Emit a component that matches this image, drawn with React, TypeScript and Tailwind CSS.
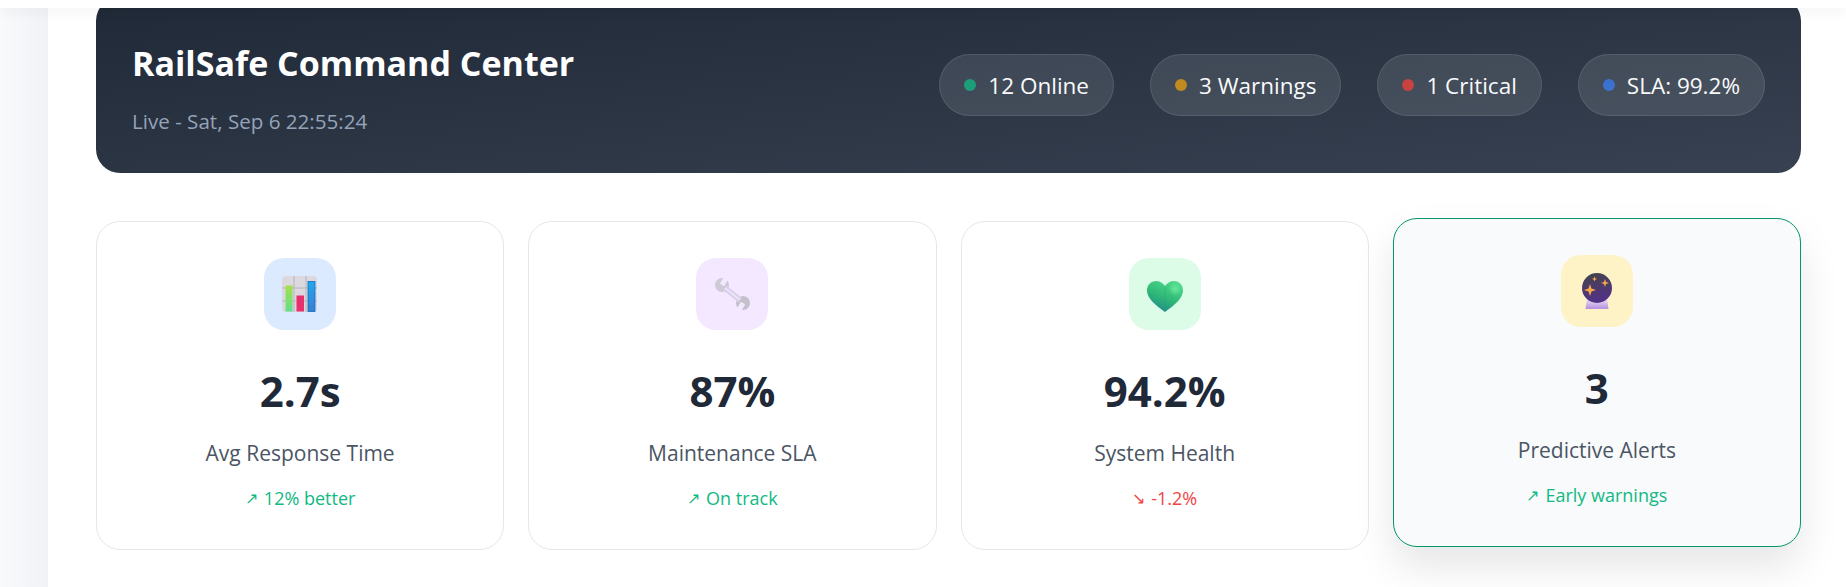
import type { ReactNode } from 'react'

const ChartIcon = () => (
  <svg viewBox="0 0 36 36" className="w-9 h-9">
    <defs>
      <linearGradient id="barGreen" x1="0" y1="0" x2="0" y2="1">
        <stop offset="0" stopColor="#a5e04a" />
        <stop offset="1" stopColor="#5fe08c" />
      </linearGradient>
      <linearGradient id="barBlue" x1="0" y1="0" x2="0" y2="1">
        <stop offset="0" stopColor="#22a7f0" />
        <stop offset="1" stopColor="#3a7fd0" />
      </linearGradient>
    </defs>
    <rect x="0" y="0" width="35" height="36" rx="4" fill="#dcd8df" />
    <path d="M12 0v36M24 0v36M0 12h35M0 25h35" stroke="#b9b4bd" strokeWidth="1" />
    <rect x="3.500" y="9.500" width="7" height="26" fill="url(#barGreen)" />
    <rect x="14.500" y="19.500" width="7.500" height="16" fill="#e8306e" />
    <rect x="26" y="5.500" width="7" height="30" fill="url(#barBlue)" stroke="#0d6fc4" strokeWidth="0.8" />
  </svg>
)

const WrenchIcon = () => (
  <svg viewBox="0 0 36 36" className="w-9 h-9" fill="none">
    <circle cx="8" cy="9" r="7" fill="#cdc9d5" />
    <circle cx="29" cy="27" r="7" fill="#c4c0cc" />
    <path d="M8 9L12 2" stroke="#f3e8ff" strokeWidth="5" />
    <path d="M29 27L25 34" stroke="#f3e8ff" strokeWidth="5" />
    <path d="M11 12L26 24" stroke="#d9d0ee" strokeWidth="5.500" />
    <path d="M11 12L26 24" stroke="#efeaf8" strokeWidth="1.500" />
  </svg>
)

const HeartIcon = () => (
  <svg viewBox="0 0 36 32" className="w-9 h-8 mt-[6px]">
    <defs>
      <linearGradient id="heartFill" x1="0.8" y1="0" x2="0.3" y2="1">
        <stop offset="0" stopColor="#4fdc8a" />
        <stop offset="0.55" stopColor="#2fb878" />
        <stop offset="1" stopColor="#1f8a8a" />
      </linearGradient>
      <radialGradient id="heartShine">
        <stop offset="0" stopColor="#6ee89c" stopOpacity="0.9" />
        <stop offset="1" stopColor="#6ee89c" stopOpacity="0" />
      </radialGradient>
    </defs>
    <path d="M18 31C8 24 0 17 0 9.500C0 4 4 0 9 0c4 0 7 2 9 5c2-3 5-5 9-5c5 0 9 4 9 9.500C36 17 28 24 18 31z" fill="url(#heartFill)" />
    <path d="M18 5V31" stroke="#1f9a70" strokeWidth="1" opacity="0.25" />
    <circle cx="28" cy="8" r="7" fill="url(#heartShine)" />
  </svg>
)

const BallIcon = () => (
  <svg viewBox="0 0 32 36" className="w-8 h-9">
    <defs>
      <linearGradient id="ballFill" x1="0.3" y1="0" x2="0.5" y2="1">
        <stop offset="0" stopColor="#45434e" />
        <stop offset="1" stopColor="#54308a" />
      </linearGradient>
      <linearGradient id="baseFill" x1="0" y1="0" x2="0" y2="1">
        <stop offset="0" stopColor="#f0e9f4" />
        <stop offset="1" stopColor="#b48fe0" />
      </linearGradient>
    </defs>
    <path d="M6 25h20l1.500 11H4.500z" fill="url(#baseFill)" />
    <circle cx="16" cy="15" r="15" fill="url(#ballFill)" />
    <path d="M9 11l1.500 4.500L15 17l-4.500 1.500L9 23l-1.500-4.500L3 17l4.500-1.500z" fill="#f8a846" />
    <path d="M24 6l1 3 3 1-3 1-1 3-1-3-3-1 3-1z" fill="#f8a846" />
    <path d="M13.500 3.500l.7 1.800 1.800.7-1.800.7-.7 1.800-.7-1.800-1.800-.7 1.800-.7z" fill="#f8a846" />
  </svg>
)

type Metric = {
  label: string
  value: string
  arrow: string
  delta: string
  up: boolean
  iconBg: string
  icon: ReactNode
  active?: boolean
}

const metrics: Metric[] = [
  { label: 'Avg Response Time', value: '2.7s', arrow: '↗', delta: '12% better', up: true, iconBg: 'bg-[#dbeafe]', icon: <ChartIcon /> },
  { label: 'Maintenance SLA', value: '87%', arrow: '↗', delta: 'On track', up: true, iconBg: 'bg-[#f3e8ff]', icon: <WrenchIcon /> },
  { label: 'System Health', value: '94.2%', arrow: '↘', delta: '-1.2%', up: false, iconBg: 'bg-[#dcfce7]', icon: <HeartIcon /> },
  { label: 'Predictive Alerts', value: '3', arrow: '↗', delta: 'Early warnings', up: true, iconBg: 'bg-[#fef3c7]', icon: <BallIcon />, active: true },
]

const statuses = [
  { label: '12 Online', dot: 'bg-[#1c9f78]' },
  { label: '3 Warnings', dot: 'bg-[#c08a20]' },
  { label: '1 Critical', dot: 'bg-[#c94242]' },
  { label: 'SLA: 99.2%', dot: 'bg-[#3b72d0]' },
]

export default function App() {
  return (
    <div className="h-[587px] w-[1846px] overflow-hidden flex flex-col bg-white font-['Open_Sans','Noto_Sans',sans-serif]">
      {/* Top bar, page is scrolled under it */}
      <div className="h-2 shrink-0 bg-white relative z-10 shadow-[0_4px_12px_rgba(0,0,0,0.05)]" />

      <div className="flex flex-1 min-h-0">
        <aside className="w-12 shrink-0 bg-gradient-to-r from-[#f8fafc] to-[#f0f2f6]" />

        <main className="flex-1 min-w-0 overflow-hidden pl-12 pr-[45px]">
          {/* Banner */}
          <section className="-mt-[11px] h-[176px] rounded-3xl bg-gradient-to-br from-[#1f2937] to-[#374151] px-9 flex items-center justify-between">
            <div>
              <h1 className="text-[34px] leading-[58px] font-bold text-white">RailSafe Command Center</h1>
              <p className="mt-[14px] text-[20.600px] leading-[30px] text-[#94a3b8]">Live - Sat, Sep 6 22:55:24</p>
            </div>
            <div className="flex items-center gap-9">
              {statuses.map((s) => (
                <div key={s.label} className="h-[62px] flex items-center gap-3 px-6 rounded-full bg-white/10 border border-white/10">
                  <span className={`w-3 h-3 rounded-full ${s.dot}`} />
                  <span className="pt-0.5 text-[22.500px] text-[#f9fafb]">{s.label}</span>
                </div>
              ))}
            </div>
          </section>

          {/* Metric cards */}
          <section className="grid grid-cols-4 gap-6 mt-12">
            {metrics.map((m) => (
              <div
                key={m.label}
                className={`h-[329px] rounded-3xl border flex flex-col items-center pt-9 ${
                  m.active
                    ? 'bg-[#f8fafc] border-[#059669] -translate-y-[3px] shadow-[0_20px_40px_rgba(0,0,0,0.1)]'
                    : 'bg-white border-[#e5e7eb]'
                }`}
              >
                <div className={`w-[72px] h-[72px] rounded-[20px] flex items-center justify-center ${m.iconBg}`}>{m.icon}</div>
                <div className="mt-6 text-[42px] leading-[74px] font-bold text-[#1f2937]">{m.value}</div>
                <div className="mt-[9px] text-[21px] leading-8 font-medium text-[#4b5563]">{m.label}</div>
                <div className={`mt-[15px] flex items-center gap-1.5 text-[18px] leading-[29px] ${m.up ? 'text-[#10b981]' : 'text-[#ef4444]'}`}>
                  <span className="text-[16px] font-['Liberation_Sans',sans-serif]">{m.arrow}</span>
                  <span>{m.delta}</span>
                </div>
              </div>
            ))}
          </section>
        </main>
      </div>
    </div>
  )
}
